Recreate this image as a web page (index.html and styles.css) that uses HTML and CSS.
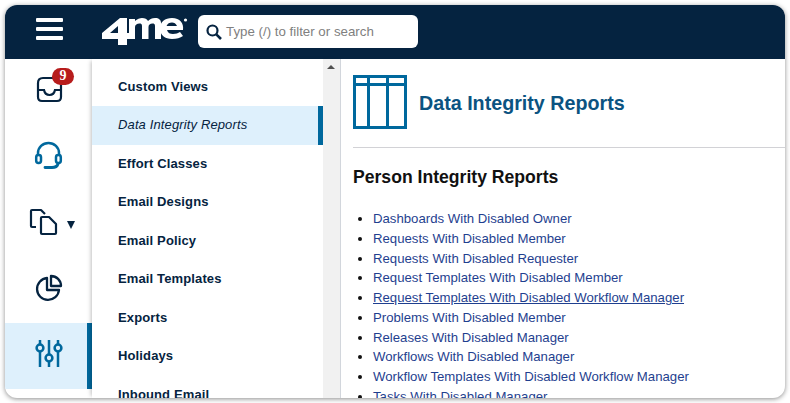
FILE: index.html
```html
<!DOCTYPE html>
<html lang="en">
<head>
<meta charset="utf-8">
<title>Data Integrity Reports</title>
<link rel="stylesheet" href="styles.css">
</head>
<body>
<div class="window">
  <header class="topbar">
    <button class="burger" aria-label="Menu"><span></span><span></span><span></span></button>
    <svg class="logo" viewBox="0 0 86 28" width="86" height="28" role="img" aria-label="4me">
      <path fill="#fff" fill-rule="evenodd" d="M0 15 L18 0 H25 V15 H28 V21 H25 V27 H16 V21 H0 Z M8 15 H16 V8 Z"/>
      <path fill="#fff" d="M27 1 H33 V3 C35 1 38 0 40 0 C43 0 45 1 46 3 C48 1 50 0 53 0 C57 0 59 2 59 5 V21 H53 V8 C53 6 52 5.500 50.500 5.500 C48 5.500 46.500 7 46.500 9 V21 H40 V8 C40 6 39 5.500 37.500 5.500 C35 5.500 33 7 33 9 V21 H27 Z"/>
      <path fill="#fff" fill-rule="evenodd" d="M70 0 C78 0 82 5 81 12 H65 C66 15 68 16 71 16 C74 16 76 15 78 14 L81 18 C78 20 75 21 70 21 C63 21 58 17 58 10.500 C58 4 63 0 70 0 Z M64.500 8 H75 C74 5.500 72 4.500 70 4.500 C67.500 4.500 65.500 5.500 64.500 8 Z"/>
      <circle cx="83.500" cy="2" r="1.600" fill="#fff"/>
    </svg>
    <div class="search">
      <svg class="search-icon" viewBox="0 0 16 16" width="16" height="16"><circle cx="6.500" cy="6.500" r="5" fill="none" stroke="#052340" stroke-width="2.200"/><path d="M10.300 10.300 L15 15" stroke="#052340" stroke-width="2.600"/></svg>
      <span class="search-text">Type (/) to filter or search</span>
    </div>
  </header>
  <div class="body">
    <nav class="rail">
      <a class="rail-item">
        <span class="rail-icon">
          <svg viewBox="0 0 29 29" width="29" height="29" fill="none" stroke="#052340" stroke-width="2.200"><path d="M3 8 Q3 3 8 3 H21 Q26 3 26 8 V22 Q26 26 22 26 H7 Q3 26 3 22 Z"/><path d="M3 15 H9 Q10 20 14.500 20 Q19 20 20 15 H26"/></svg>
          <span class="badge">9</span>
        </span>
      </a>
      <a class="rail-item">
        <span class="rail-icon">
          <svg viewBox="0 0 29 29" width="29" height="29" fill="none" stroke="#00689d" stroke-width="2.500"><path d="M3 14 V12 A10.500 10 0 0 1 24 12 V14"/><rect x="1.200" y="14" width="4.800" height="8" rx="2.200"/><rect x="21" y="14" width="4.800" height="8" rx="2.200"/><path d="M23 23 Q22 26.500 17 26.500 H10" stroke-linecap="round" stroke-width="2.800"/></svg>
        </span>
      </a>
      <a class="rail-item">
        <span class="rail-icon">
          <svg viewBox="0 0 29 29" width="29" height="29" fill="none" stroke="#052340" stroke-width="2.200" stroke-linejoin="round"><path d="M1 20 H-3 Q-4 20 -4 19 V4 Q-4 3 -3 3 H6 L10 7"/><path d="M7 10 H14 L21 17 V26 Q21 27 20 27 H7 Q6 27 6 26 V11 Q6 10 7 10 Z"/></svg>
          <span class="caret"></span>
        </span>
      </a>
      <a class="rail-item">
        <span class="rail-icon">
          <svg viewBox="0 0 29 29" width="29" height="29" fill="none" stroke="#052340" stroke-width="2.300" stroke-linejoin="round"><path d="M12 5 A11 11 0 1 0 24 17 H12 Z"/><path d="M16 3 A10 10 0 0 1 26 13 H16 Z"/></svg>
        </span>
      </a>
      <a class="rail-item rail-active">
        <span class="rail-icon">
          <svg viewBox="0 0 29 29" width="29" height="29" fill="none" stroke="#00689d" stroke-width="2.500"><path d="M5 1 V5.500 M5 12.500 V28 M14 1 V15.500 M14 22.500 V28 M23 1 V5.500 M23 12.500 V28"/><circle cx="5" cy="9" r="3.400"/><circle cx="14" cy="19" r="3.400"/><circle cx="23" cy="9" r="3.400"/></svg>
        </span>
      </a>
    </nav>
    <aside class="menu">
      <ul class="menu-list">
        <li>Custom Views</li>
        <li class="menu-active">Data Integrity Reports</li>
        <li>Effort Classes</li>
        <li>Email Designs</li>
        <li>Email Policy</li>
        <li>Email Templates</li>
        <li>Exports</li>
        <li>Holidays</li>
        <li>Inbound Email</li>
      </ul>
      <div class="scrollbar"><span class="arrow-up"></span></div>
    </aside>
    <main class="content">
      <div class="title-row">
        <svg class="title-icon" viewBox="0 0 54 54" width="54" height="54" fill="none" stroke="#00689d" stroke-width="3"><rect x="1.500" y="1.500" width="51" height="51"/><path d="M1.500 9.500 H52.500 M15.500 1.500 V52.500 M34.500 1.500 V52.500"/></svg>
        <h1>Data Integrity Reports</h1>
      </div>
      <h2>Person Integrity Reports</h2>
      <ul class="links">
        <li><a>Dashboards With Disabled Owner</a></li>
        <li><a>Requests With Disabled Member</a></li>
        <li><a>Requests With Disabled Requester</a></li>
        <li><a>Request Templates With Disabled Member</a></li>
        <li><a class="hover">Request Templates With Disabled Workflow Manager</a></li>
        <li><a>Problems With Disabled Member</a></li>
        <li><a>Releases With Disabled Manager</a></li>
        <li><a>Workflows With Disabled Manager</a></li>
        <li><a>Workflow Templates With Disabled Workflow Manager</a></li>
        <li><a>Tasks With Disabled Manager</a></li>
      </ul>
    </main>
  </div>
</div>
</body>
</html>
```
FILE: styles.css
```css
* { box-sizing: border-box; }
html, body { margin: 0; height: 100%; background: #fff; overflow: hidden; }
body { padding: 5px; font-family: "Liberation Sans", Arial, sans-serif; }
.window {
  height: 393px;
  border-radius: 12px;
  overflow: hidden;
  background: #fff;
  box-shadow: 0 1px 5px rgba(0,0,0,.45);
  display: flex;
  flex-direction: column;
}
.topbar {
  height: 54px;
  flex: none;
  background: #052340;
  display: flex;
  align-items: center;
  padding-left: 31px;
}
.burger {
  width: 27px; height: 22px; margin-top: -6px; padding: 0; border: 0; background: none;
  display: flex; flex-direction: column; justify-content: space-between;
}
.burger span { display: block; height: 3.6px; background: #fff; border-radius: 1px; }
.logo { margin-left: 39px; flex: none; }
.search {
  margin-left: 10px; margin-top: -1px;
  width: 220px; height: 33px;
  background: #fff;
  border-radius: 6px;
  display: flex; align-items: center;
  padding-left: 8px;
}
.search-icon { flex: none; }
.search-text { margin-left: 4px; font-size: 13.3px; color: #808080; }
.body { flex: 1; display: flex; min-height: 0; }
.rail { width: 87px; flex: none; }
.rail-item {
  display: flex; align-items: center; justify-content: center;
  height: 66px;
  padding: 0 0 5px 2px;
}
.rail-active {
  background: #def0fc;
  border-right: 5px solid #00689d;
  padding-left: 7px;
}
.rail-icon { position: relative; display: block; width: 29px; height: 29px; }
.rail-icon svg { display: block; overflow: visible; }
.badge {
  position: absolute; left: 17px; top: -7px;
  width: 22px; height: 17px; border-radius: 9px;
  background: #b71c1c; color: #fff;
  font: bold 14px/16px "Liberation Serif", serif; text-align: center;
}
.caret {
  position: absolute; left: 32px; top: 14px;
  border-left: 4px solid transparent; border-right: 4px solid transparent;
  border-top: 8px solid #052340;
}
.menu {
  width: 249px; flex: none; display: flex;
  box-shadow: -3px 0 4px -2px rgba(0,0,0,.25);
  border-right: 1px solid #d2d6dc;
  overflow: hidden;
}
.menu-list { flex: 1; margin: 0; padding: 8.6px 0 0; list-style: none; overflow: hidden; }
.menu-list li {
  height: 38.5px; line-height: 38.5px;
  padding-left: 26px;
  font-size: 13px; font-weight: 700; color: #052340; letter-spacing: .13px;
}
.menu-active.menu-active {
  background: #def0fc;
  border-right: 5px solid #00689d;
  font-weight: 400; font-style: italic;
}
.scrollbar { width: 17px; flex: none; background: #f1f1f1; position: relative; }
.arrow-up {
  position: absolute; left: 4px; top: 6px;
  border-left: 4px solid transparent; border-right: 4px solid transparent;
  border-bottom: 4px solid #505050;
}
.content { flex: 1; min-width: 0; overflow: hidden; padding-left: 12px; }
.title-row {
  display: flex; align-items: center;
  height: 89px;
  border-bottom: 1px solid #d2d2d6;
}
.title-icon { flex: none; margin-top: -2px; }
h1 { margin: 0 0 0 12px; font-size: 19.7px; font-weight: 700; color: #0b5381; }
h2 { margin: 19px 0 0; font-size: 17.6px; line-height: 21px; font-weight: 700; color: #111; }
.links { margin: 21px 0 0; padding: 0 0 0 20px; list-style: disc; font-size: 13.2px; line-height: 19.75px; color: #111; }
.links a { color: #1f3f8f; }
.links a.hover { text-decoration: underline; }
```
